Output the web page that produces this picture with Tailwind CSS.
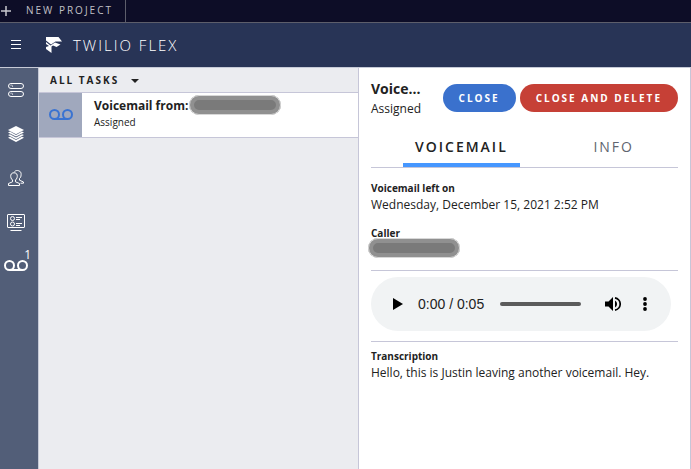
<!DOCTYPE html>
<html lang="en">
<head>
<meta charset="utf-8">
<meta name="viewport" content="width=device-width, initial-scale=1">
<title>Twilio Flex</title>
<script src="https://cdn.jsdelivr.net/npm/@tailwindcss/browser@4"></script>
</head>
<body class="flex h-screen flex-col overflow-hidden bg-white font-['Open_Sans',sans-serif] text-xs text-[#222]">
  <div class="flex h-[23px] shrink-0 border-b border-[#5d5e6b] bg-[#0d0d27]">
    <button class="flex items-center border-r border-[#5d5e6b] pr-3 text-[10px] tracking-[2px] text-[#c0c0c6]">
      <svg class="mr-3.5 h-3 w-3" viewBox="0 0 12 12" fill="none" stroke="#c8c8ce" stroke-width="1.500" aria-hidden="true"><path d="M6 1v10M1 6h10"/></svg>
      NEW PROJECT
    </button>
  </div>
  <header class="flex h-[45px] shrink-0 items-center border-b border-[#c6cad7] bg-[#283456] pl-2.5 text-white">
    <button aria-label="Menu" class="mr-6">
      <svg class="h-3 w-3" viewBox="0 0 12 12" stroke="#fff" stroke-width="1" aria-hidden="true"><path d="M1 1.500h10M1 5.500h10M1 9.500h10"/></svg>
    </button>
    <svg class="mr-[11px] h-4 w-4" viewBox="0 0 16 16" fill="#fff" aria-hidden="true"><path d="M0 0h12.500L16 4.500H9.500L5 7.500 0 3.500ZM0 5 4.500 8.500 9 5.500 14.500 7.500 10.500 10 7 8.500 5.500 9.500V16L0 12V10L3 9 0 7Z"/></svg>
    <span class="text-[15px] font-light tracking-[2px]">TWILIO FLEX</span>
  </header>
  <div class="flex min-h-0 flex-1">
    <nav aria-label="Main" class="flex w-[39px] shrink-0 flex-col border-r border-[#c6cad7] bg-[#525e78] pr-1.5 text-white">
      <a href="#" aria-label="Agent desktop" class="flex h-11 items-center justify-center">
        <svg class="h-4 w-4" viewBox="0 0 16 16" fill="none" stroke="currentColor" aria-hidden="true"><rect x=".5" y="1.500" width="15" height="5" rx="2.500"/><rect x=".5" y="9.500" width="15" height="5" rx="2.500"/><path d="M2.500 3.500c1.500-1 2.500 0 2 1.500M2.500 11.500c1.500-1 2.500 0 2 1.500" stroke-width=".6"/></svg>
      </a>
      <a href="#" aria-label="Teams" class="flex h-11 items-center justify-center">
        <svg class="h-4 w-4" viewBox="0 0 16 16" fill="currentColor" aria-hidden="true"><path d="M8 0 16 4 8 8.200 0 4ZM0 6.500 2 5.600 8 8.900 14 5.600 16 6.500 8 10.600ZM0 9.100 2 8.200 8 11.500 14 8.200 16 9.100 8 13.200ZM0 11.700 2 10.800 8 14.100 14 10.800 16 11.700 8 16Z"/></svg>
      </a>
      <a href="#" aria-label="Contacts" class="flex h-11 items-center justify-center">
        <svg class="h-4 w-4" viewBox="0 0 16 16" fill="none" stroke="currentColor" aria-hidden="true"><path d="M.5 15.500V13.500L4.500 11.800V10C3 8.800 2.500 7 2.800 5.200 3.200 3.200 4.500 2.800 6 2.800S8.800 3.200 9.200 5.200C9.500 7 9 8.800 7.500 10V11.800L11.500 13.500V15.500Z"/><path d="M6.500 1.500C7.500.6 9 .3 10.500.7c2 .5 2.800 2 2.600 4C13 6.500 12.700 7.600 11.500 8.500V10.200L15.500 12V13.200H12.500"/></svg>
      </a>
      <a href="#" aria-label="Queues" class="flex h-11 items-center justify-center">
        <svg class="h-[18px] w-[18px]" viewBox="0 0 18 18" fill="none" stroke="currentColor" aria-hidden="true"><rect x=".5" y="1.500" width="17" height="13" rx=".5"/><circle cx="5.500" cy="5.500" r="2"/><circle cx="5.500" cy="11" r="2"/><path d="M9 4.500h6M9 6.500h4M9 10.500h6M9 12.500h4M3.500 17.500h11"/></svg>
      </a>
      <a href="#" aria-label="Voicemails, 1 new" class="relative flex h-11 items-center justify-center">
        <svg class="h-6 w-6" viewBox="0 0 24 24" fill="none" stroke="currentColor" stroke-width="2" aria-hidden="true"><circle cx="5.500" cy="11.500" r="4.500"/><circle cx="18.500" cy="11.500" r="4.500"/><path d="M5.500 16h13"/></svg>
        <span class="absolute right-px top-[3px] text-xs">1</span>
      </a>
    </nav>
    <section aria-label="Tasks" class="w-[320px] shrink-0 border-r border-[#c6c6d8] bg-[#ebecf0]">
      <button class="flex h-[25px] w-full items-center border-b border-[#c6c6d8] pt-0.5 pl-[11px] text-[10px] font-bold tracking-[2px]">
        ALL TASKS
        <svg class="ml-3 h-2 w-2" viewBox="0 0 8 8" fill="#222" aria-hidden="true"><path d="M0 2h8L4 6Z"/></svg>
      </button>
      <a href="#" class="flex h-[45px] border-b border-[#c6c6d8] bg-white">
        <span class="flex w-[43px] shrink-0 items-center justify-center bg-[#a0a8bd] text-[#3a73d1]">
          <svg class="h-6 w-6" viewBox="0 0 24 24" fill="none" stroke="currentColor" stroke-width="2" aria-hidden="true"><circle cx="5.500" cy="11.500" r="4.500"/><circle cx="18.500" cy="11.500" r="4.500"/><path d="M5.500 16h13"/></svg>
        </span>
        <span class="flex flex-col pl-3 pt-0.5">
          <span class="flex h-5 items-center gap-px font-bold"><span class="pt-0.5">Voicemail from:</span><span class="h-5 w-[92px] rounded-full border-[5px] border-[#909090] bg-[#7a7a7a] outline outline-[#d8d8d8] -outline-offset-1"></span></span>
          <span class="text-[10px] leading-[14px]">Assigned</span>
        </span>
      </a>
    </section>
    <main class="min-w-0 flex-1 border-r border-[#c6c6d8] px-3">
      <div class="flex items-start pt-[11px]">
        <div class="min-w-0 flex-1">
          <h1 class="text-sm leading-5 font-bold">Voice...</h1>
          <p class="leading-5">Assigned</p>
        </div>
        <button class="mt-[5px] h-7 rounded-full bg-[#3a71cd] px-4 pt-0.5 text-[10px] font-bold tracking-[2px] text-white">CLOSE</button>
        <button class="mt-[5px] ml-1 h-7 rounded-full bg-[#c64036] px-4 pt-0.5 text-[10px] font-bold tracking-[2px] text-white">CLOSE AND DELETE</button>
      </div>
      <div role="tablist" class="mt-2 flex h-[41px] justify-between border-b border-[#c6c6d8] px-8 text-sm tracking-[2px]">
        <button role="tab" aria-selected="true" class="border-b-4 border-[#4697ff] px-3 pt-1 font-semibold">VOICEMAIL</button>
        <button role="tab" aria-selected="false" class="border-b-4 border-transparent px-3 pt-1 text-[#60646f]">INFO</button>
      </div>
      <section class="border-b border-[#c6c6d8] pt-3 pb-3">
        <h2 class="text-[10px] leading-4 font-bold">Voicemail left on</h2>
        <p class="leading-[18px]">Wednesday, December 15, 2021 2:52 PM</p>
        <h2 class="mt-2.5 text-[10px] leading-[18px] font-bold">Caller</h2>
        <div class="relative -mt-1 -ml-[3px] h-5 w-[92px] rounded-full border-[5px] border-[#909090] bg-[#7a7a7a] outline outline-[#d8d8d8] -outline-offset-1"></div>
      </section>
      <section aria-label="Audio player" class="border-b border-[#c6c6d8] pt-1.5 pb-2.5">
        <div class="mr-[7px] flex h-[54px] items-center rounded-full bg-[#f1f3f4] pr-[18px] pl-[22px] font-['Liberation_Sans',sans-serif] text-sm">
          <button aria-label="Play"><svg class="h-3 w-[10px]" viewBox="0 0 10 12" fill="#000" aria-hidden="true"><path d="M0 0 10 6 0 12Z"/></svg></button>
          <span class="ml-[15px]">0:00 / 0:05</span>
          <input type="range" min="0" max="5" value="0" aria-label="Position" class="mx-4 h-1 min-w-0 flex-1 appearance-none rounded-full bg-[#5b5b5b] [&::-webkit-slider-thumb]:appearance-none">
          <button aria-label="Mute" class="mx-2"><svg class="h-4 w-4" viewBox="0 0 16 16" aria-hidden="true"><path d="M0 5.500H3.500L8 1V15L3.500 10.500H0ZM10 4.500a4 4 0 0 1 0 7Z" fill="#000"/><path d="M10 1.800a6.300 6.300 0 0 1 0 12.400" fill="none" stroke="#000" stroke-width="1.700"/></svg></button>
          <button aria-label="More options" class="ml-2"><svg class="h-4 w-4" viewBox="0 0 16 16" fill="#000" aria-hidden="true"><circle cx="8" cy="3" r="1.900"/><circle cx="8" cy="8" r="1.900"/><circle cx="8" cy="13" r="1.900"/></svg></button>
        </div>
      </section>
      <section class="pt-1.5">
        <h2 class="text-[10px] leading-4 font-bold">Transcription</h2>
        <p class="leading-[18px]">Hello, this is Justin leaving another voicemail. Hey.</p>
      </section>
    </main>
  </div>
</body>
</html>
